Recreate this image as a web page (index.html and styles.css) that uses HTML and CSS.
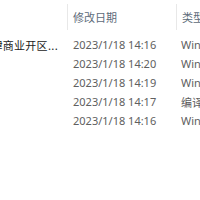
FILE: index.html
```html
<!DOCTYPE html>
<html lang="zh-CN">
<head>
<meta charset="utf-8">
<link rel="stylesheet" href="styles.css">
</head>
<body>
<div class="list">
  <div class="head">
    <div class="hc hname"></div>
    <div class="hc hdate">修改日期</div>
    <div class="hc htype">类型</div>
  </div>
  <div class="rows">
    <div class="row"><div class="name"><span>天津肆商业开区...</span></div><div class="date">2023/1/18 14:16</div><div class="type">Windows</div></div>
    <div class="row"><div class="name"></div><div class="date">2023/1/18 14:20</div><div class="type">Windows</div></div>
    <div class="row"><div class="name"></div><div class="date">2023/1/18 14:19</div><div class="type">Windows</div></div>
    <div class="row"><div class="name"></div><div class="date">2023/1/18 14:17</div><div class="type">编译的</div></div>
    <div class="row"><div class="name"></div><div class="date">2023/1/18 14:16</div><div class="type">Windows</div></div>
  </div>
</div>
</body>
</html>
```

FILE: styles.css
```css
html, body {
  margin: 0;
  padding: 0;
  background: #ffffff;
}
body {
  width: 200px;
  height: 200px;
  overflow: hidden;
  font-family: "Noto Sans", "Noto Sans CJK SC", sans-serif;
  font-size: 11px;
}
.list {
  display: flex;
  flex-direction: column;
}
.head {
  display: grid;
  grid-template-columns: 67px 109px 60px;
  margin-top: 4px;
  height: 26px;
}
.hc {
  display: flex;
  align-items: center;
  padding-left: 5px;
  color: #5d6b7a;
  white-space: nowrap;
  overflow: hidden;
}
.hdate, .htype {
  border-left: 1px solid #e8e8e8;
}
.rows {
  display: flex;
  flex-direction: column;
  padding-top: 5px;
}
.row {
  display: grid;
  grid-template-columns: 67px 109px 60px;
  height: 19px;
  align-items: center;
}
.name {
  display: flex;
  justify-content: flex-end;
  overflow: hidden;
  white-space: nowrap;
  padding-right: 9px;
  color: #1b1b1b;
  font-family: "Noto Sans CJK SC", sans-serif;
  font-size: 11px;
  letter-spacing: 0.3px;
}
.date, .type {
  padding-left: 6px;
  color: #606060;
  white-space: nowrap;
  overflow: hidden;
}
.type {
  padding-left: 5px;
}
```
